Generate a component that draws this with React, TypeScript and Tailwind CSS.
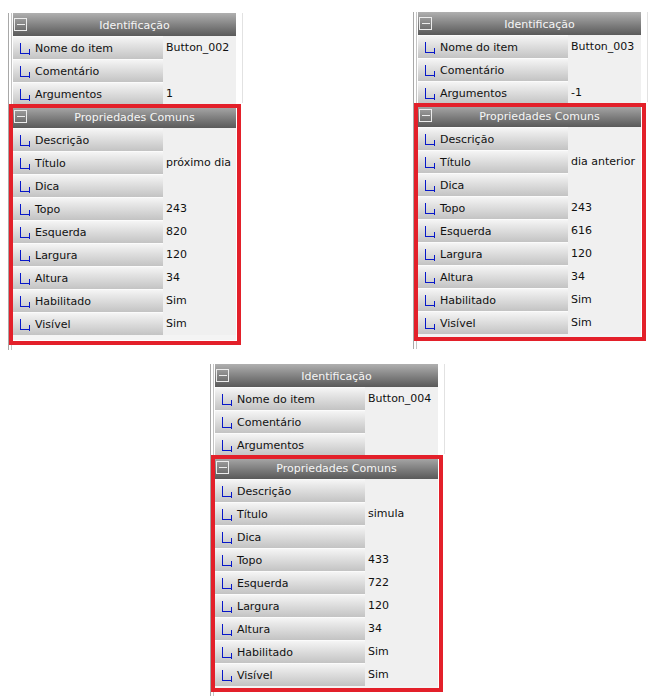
import React from 'react';

type Row = { label: string; value?: string };

interface PanelProps {
  name: string;
  args: string;
  title: string;
  top: string;
  left: string;
  redBox: string;
}

const font = { fontFamily: '"DejaVu Sans", Verdana, sans-serif' };

function TreeLink() {
  return (
    <svg width="12" height="22" viewBox="0 0 12 22" className="shrink-0" shapeRendering="crispEdges">
      <path d="M1.5 6 V16.5 H10" stroke="#0818c8" strokeWidth="1.3" fill="none" />
      <path d="M10.5 12 V18" stroke="#0818c8" strokeWidth="1.3" fill="none" />
    </svg>
  );
}

function MinusBox() {
  return (
    <svg width="13" height="13" viewBox="0 0 13 13" className="shrink-0" shapeRendering="crispEdges">
      <rect x="0.5" y="0.5" width="12" height="12" fill="none" stroke="#ececec" strokeWidth="1" />
      <path d="M2.5 6.5 H10.5" stroke="#ececec" strokeWidth="1" />
    </svg>
  );
}

function Header({ text }: { text: string }) {
  return (
    <div className="relative flex h-[23px] items-center bg-gradient-to-b from-[#b0b0b0] to-[#5a5a5a] pl-[1px]">
      <MinusBox />
      <span className="flex-1 pl-[6px] pt-[3px] text-center text-[11px] text-[#f6f6f6]">{text}</span>
    </div>
  );
}

function PropRow({ label, value }: Row) {
  return (
    <div className="flex h-[23px]">
      <div className="flex w-[150px] items-center border-t border-[#fbfbfb] bg-gradient-to-b from-[#f5f5f5] to-[#c3c3c3] pl-[6px]">
        <TreeLink />
        <span className="pl-[4px] pt-[2px] text-[11px] text-[#111]">{label}</span>
      </div>
      <div className="flex flex-1 items-center bg-[#f0f0f0] pl-[3px] pt-[2px] text-[11px] text-[#111]">
        {value}
      </div>
    </div>
  );
}

function Panel({ name, args, title, top, left, redBox }: PanelProps) {
  const ident: Row[] = [
    { label: 'Nome do item', value: name },
    { label: 'Comentário' },
    { label: 'Argumentos', value: args },
  ];
  const common: Row[] = [
    { label: 'Descrição' },
    { label: 'Título', value: title },
    { label: 'Dica' },
    { label: 'Topo', value: top },
    { label: 'Esquerda', value: left },
    { label: 'Largura', value: '120' },
    { label: 'Altura', value: '34' },
    { label: 'Habilitado', value: 'Sim' },
    { label: 'Visível', value: 'Sim' },
  ];

  return (
    <div className="flex border-l border-[#a8a8a8] pl-[2px]" style={font}>
      <div className="border-l border-[#c4c4c4] pb-[10px] pl-[1px]">
        <div className="relative w-[223px]">
          <Header text="Identificação" />
          {ident.map((r) => (
            <PropRow key={r.label} {...r} />
          ))}
          <Header text="Propriedades Comuns" />
          {common.map((r) => (
            <PropRow key={r.label} {...r} />
          ))}
          <div className="h-[5px] bg-[#f4f4f4]" />
          {/* annotation box */}
          <div className={`pointer-events-none absolute left-[-4px] top-[91px] w-[232px] border-[4px] border-[#e3202a] ${redBox}`} />
        </div>
      </div>
      <div className="ml-[6px] h-[90px] w-px self-start bg-[#e2e2e2]" />
    </div>
  );
}

export default function App() {
  return (
    <div className="h-[696px] w-[653px] bg-white">
      <div className="flex pl-[8px] pt-[13px]">
        <Panel name="Button_002" args="1" title="próximo dia" top="243" left="820" redBox="h-[241px]" />
        <div className="-mt-[1px] ml-[170px]">
          <Panel name="Button_003" args="-1" title="dia anterior" top="243" left="616" redBox="h-[238px]" />
        </div>
      </div>
      <div className="ml-[210px] mt-[14px]">
        <Panel name="Button_004" args="" title="simula" top="433" left="722" redBox="h-[237px]" />
      </div>
    </div>
  );
}
